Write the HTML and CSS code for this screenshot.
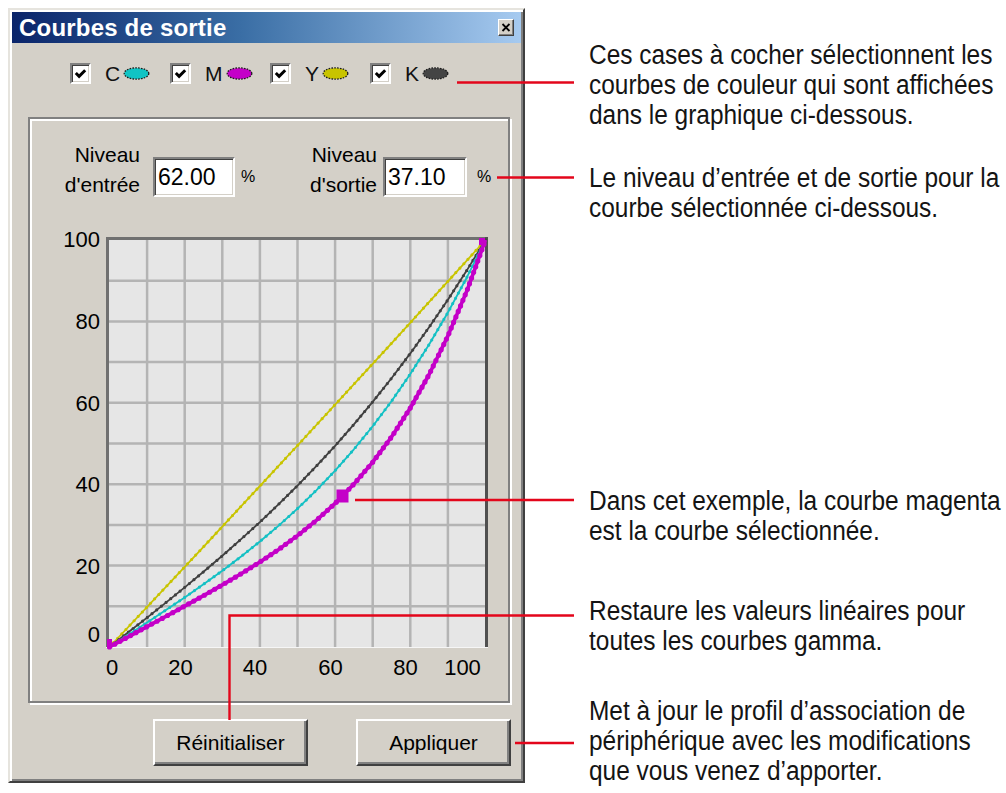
FILE: index.html
```html
<!DOCTYPE html>
<html lang="fr">
<head>
<meta charset="utf-8">
<title>Courbes de sortie</title>
<link rel="stylesheet" href="styles.css">
</head>
<body>
<div class="page">
  <div class="window">
    <div class="titlebar">
      <span class="title">Courbes de sortie</span>
      <span class="close"><svg viewBox="0 0 10 9" width="10" height="9"><path d="M1.5 1 L8.5 8 M8.5 1 L1.5 8" stroke="#000" stroke-width="1.8" fill="none"/></svg></span>
    </div>

    <div class="channels">
      <div class="chan">
        <span class="cb"><svg viewBox="0 0 16 16" width="15" height="15"><path d="M3 7.5 L6.5 11 L13 4.5" stroke="#000" stroke-width="3.2" fill="none"/></svg></span>
        <span class="chan-letter">C</span>
        <svg class="swatch" viewBox="0 0 27 13" width="27" height="13"><ellipse cx="13.5" cy="6.5" rx="12.3" ry="5.6" fill="#10c4c4" stroke="#1c1c1c" stroke-width="1.3" stroke-dasharray="1.6 1.2"/></svg>
      </div>
      <div class="chan">
        <span class="cb"><svg viewBox="0 0 16 16" width="15" height="15"><path d="M3 7.5 L6.5 11 L13 4.5" stroke="#000" stroke-width="3.2" fill="none"/></svg></span>
        <span class="chan-letter">M</span>
        <svg class="swatch" viewBox="0 0 27 13" width="27" height="13"><ellipse cx="13.5" cy="6.5" rx="12.3" ry="5.6" fill="#c400c8" stroke="#1c1c1c" stroke-width="1.3" stroke-dasharray="1.6 1.2"/></svg>
      </div>
      <div class="chan">
        <span class="cb"><svg viewBox="0 0 16 16" width="15" height="15"><path d="M3 7.5 L6.5 11 L13 4.5" stroke="#000" stroke-width="3.2" fill="none"/></svg></span>
        <span class="chan-letter">Y</span>
        <svg class="swatch" viewBox="0 0 27 13" width="27" height="13"><ellipse cx="13.5" cy="6.5" rx="12.3" ry="5.6" fill="#c8c400" stroke="#1c1c1c" stroke-width="1.3" stroke-dasharray="1.6 1.2"/></svg>
      </div>
      <div class="chan">
        <span class="cb"><svg viewBox="0 0 16 16" width="15" height="15"><path d="M3 7.5 L6.5 11 L13 4.5" stroke="#000" stroke-width="3.2" fill="none"/></svg></span>
        <span class="chan-letter">K</span>
        <svg class="swatch" viewBox="0 0 27 13" width="27" height="13"><ellipse cx="13.5" cy="6.5" rx="12.3" ry="5.6" fill="#444444" stroke="#1c1c1c" stroke-width="1.3" stroke-dasharray="1.6 1.2"/></svg>
      </div>
    </div>

    <div class="group">
      <div class="levels">
        <div class="lvl-label lvl-in">Niveau<br>d'entrée</div>
        <div class="field f-in">62.00</div>
        <span class="pct">%</span>
        <div class="lvl-label lvl-out">Niveau<br>d'sortie</div>
        <div class="field f-out">37.10</div>
        <span class="pct pct2">%</span>
      </div>

      <svg class="chart" viewBox="30 225 478 476" width="478" height="476">
        <rect x="109" y="240" width="376" height="407" fill="#e6e6e6"/>
        <g stroke="#b4b4b4" stroke-width="2.5">
          <path d="M147.1 240 V647 M184.7 240 V647 M222.3 240 V647 M259.9 240 V647 M297.5 240 V647 M335.1 240 V647 M372.7 240 V647 M410.3 240 V647 M447.9 240 V647"/>
          <path d="M109 606.3 H485 M109 565.6 H485 M109 524.9 H485 M109 484.2 H485 M109 443.5 H485 M109 402.8 H485 M109 362.1 H485 M109 321.4 H485 M109 280.7 H485"/>
        </g>
        <rect x="106" y="237" width="3" height="410" fill="#707070"/>
        <rect x="106" y="237" width="382" height="3" fill="#707070"/>
        <rect x="485" y="237" width="3" height="410" fill="#505050"/>
        <rect x="106" y="647" width="382" height="1" fill="#f6f6f6"/>

        <g fill="none" stroke-linejoin="round">
          <polyline stroke="#c8c400" stroke-width="1.8" points="109.5,647 203.5,546.8 297.5,445.5 391.5,343.3 485.5,240"/>
          <polyline stroke="#c8c400" stroke-width="3.2" stroke-linecap="round" stroke-dasharray="0 6" points="109.5,647 203.5,546.8 297.5,445.5 391.5,343.3 485.5,240"/>

          <polyline stroke="#404040" stroke-width="1.8" points="109.5,647 128.3,632.3 147.1,617.6 165.9,602.6 184.7,587.4 203.5,571.8 222.3,555.8 241.1,539.2 259.9,522.1 278.7,504.2 297.5,485.6 316.3,466.2 335.1,445.8 353.9,424.4 372.7,401.9 391.5,378.3 410.3,353.4 429.1,327.2 447.9,299.7 466.7,270.6 485.5,240"/>
          <polyline stroke="#404040" stroke-width="3.2" stroke-linecap="round" stroke-dasharray="0 6" points="109.5,647 128.3,632.3 147.1,617.6 165.9,602.6 184.7,587.4 203.5,571.8 222.3,555.8 241.1,539.2 259.9,522.1 278.7,504.2 297.5,485.6 316.3,466.2 335.1,445.8 353.9,424.4 372.7,401.9 391.5,378.3 410.3,353.4 429.1,327.2 447.9,299.7 466.7,270.6 485.5,240"/>

          <polyline stroke="#14c0c4" stroke-width="1.8" points="109.5,647 128.3,634.8 147.1,622.5 165.9,610.1 184.7,597.4 203.5,584.3 222.3,570.8 241.1,556.5 259.9,541.5 278.7,525.6 297.5,508.6 316.3,490.3 335.1,470.6 353.9,449.3 372.7,426.2 391.5,401.2 410.3,374.0 429.1,344.5 447.9,312.5 466.7,277.7 485.5,240"/>
          <polyline stroke="#14c0c4" stroke-width="3.2" stroke-linecap="round" stroke-dasharray="0 6" points="109.5,647 128.3,634.8 147.1,622.5 165.9,610.1 184.7,597.4 203.5,584.3 222.3,570.8 241.1,556.5 259.9,541.5 278.7,525.6 297.5,508.6 316.3,490.3 335.1,470.6 353.9,449.3 372.7,426.2 391.5,401.2 410.3,374.0 429.1,344.5 447.9,312.5 466.7,277.7 485.5,240"/>

          <polyline stroke="#c400c8" stroke-width="3.6" points="109.5,647 128.3,636.8 147.1,626.6 165.9,616.4 184.7,606.1 203.5,595.7 222.3,584.9 241.1,573.8 259.9,562.0 278.7,549.4 297.5,535.6 316.3,520.4 335.1,503.4 353.9,484.1 372.7,462.2 391.5,437.0 410.3,408.0 429.1,374.5 447.9,335.9 466.7,291.3 485.5,240"/>
          <polyline stroke="#c400c8" stroke-width="5.2" stroke-linecap="round" stroke-dasharray="0 6" points="109.5,647 128.3,636.8 147.1,626.6 165.9,616.4 184.7,606.1 203.5,595.7 222.3,584.9 241.1,573.8 259.9,562.0 278.7,549.4 297.5,535.6 316.3,520.4 335.1,503.4 353.9,484.1 372.7,462.2 391.5,437.0 410.3,408.0 429.1,374.5 447.9,335.9 466.7,291.3 485.5,240"/>
        </g>
        <rect x="107" y="639" width="5" height="8" fill="#c400c8"/>
        <rect x="479" y="238" width="6" height="7" fill="#c400c8"/>
        <rect x="336.5" y="489.5" width="12" height="13" fill="#c400c8"/>

        <g class="axis" text-anchor="end">
          <text x="100" y="247">100</text>
          <text x="100" y="329">80</text>
          <text x="100" y="411">60</text>
          <text x="100" y="492">40</text>
          <text x="100" y="574">20</text>
          <text x="100" y="642">0</text>
        </g>
        <g class="axis" text-anchor="middle">
          <text x="112" y="675">0</text>
          <text x="180.5" y="675">20</text>
          <text x="255" y="675">40</text>
          <text x="330.5" y="675">60</text>
          <text x="405.5" y="675">80</text>
          <text x="462.5" y="675">100</text>
        </g>
      </svg>
    </div>

    <div class="buttons">
      <button class="btn">Réinitialiser</button>
      <button class="btn">Appliquer</button>
    </div>
  </div>

  <div class="notes">
    <p class="note n1">Ces cases à cocher sélectionnent les<br>courbes de couleur qui sont affichées<br>dans le graphique ci-dessous.</p>
    <p class="note n2">Le niveau d’entrée et de sortie pour la<br>courbe sélectionnée ci-dessous.</p>
    <p class="note n3">Dans cet exemple, la courbe magenta<br>est la courbe sélectionnée.</p>
    <p class="note n4">Restaure les valeurs linéaires pour<br>toutes les courbes gamma.</p>
    <p class="note n5">Met à jour le profil d’association de<br>périphérique avec les modifications<br>que vous venez d’apporter.</p>
  </div>

  <svg class="leaders" viewBox="0 0 1006 793" width="1006" height="793">
    <g stroke="#e3061b" stroke-width="2.4" fill="none">
      <path d="M457 82.5 H574"/>
      <path d="M497 177.5 H574"/>
      <path d="M355 500 H574"/>
      <path d="M229.5 720 V615.5 H574"/>
      <path d="M515 743 H574"/>
    </g>
  </svg>
</div>
</body>
</html>
```

FILE: styles.css
```css
* { box-sizing: border-box; }

html, body {
  margin: 0;
  padding: 0;
}

body {
  background: #ffffff;
  width: 1006px;
  height: 793px;
  overflow: hidden;
  font-family: "Liberation Sans", Arial, sans-serif;
  color: #000;
}

.page {
  position: relative;
  display: flex;
  align-items: flex-start;
  width: 1006px;
  height: 793px;
}

/* ---------- dialog window ---------- */
.window {
  margin: 8px 0 0 8px;
  width: 517px;
  height: 775px;
  flex: none;
  background: #d4d0c8;
  border: 2px solid;
  border-color: #e6e4de #404040 #404040 #e6e4de;
  box-shadow: inset 2px 2px 0 #ffffff, inset -2px -2px 0 #808080;
  padding: 2px;
  display: flex;
  flex-direction: column;
}

.titlebar {
  height: 31px;
  flex: none;
  display: flex;
  align-items: center;
  padding-left: 7px;
  background: linear-gradient(to right, #0a246a 0%, #3a6ea5 45%, #a6caf0 100%);
}

.title {
  color: #ffffff;
  font-weight: bold;
  font-size: 24px;
  line-height: 1;
  letter-spacing: 0.2px;
}

.close {
  margin-left: auto;
  margin-right: 7px;
  width: 16px;
  height: 17px;
  background: #d4d0c8;
  border: 1px solid;
  border-color: #ffffff #404040 #404040 #ffffff;
  box-shadow: inset -1px -1px 0 #808080;
  display: flex;
  align-items: center;
  justify-content: center;
}

.close svg { display: block; }

/* ---------- channel checkboxes ---------- */
.channels {
  margin-top: 20px;
  height: 21px;
  padding-left: 58px;
  display: flex;
  flex: none;
}

.chan {
  width: 100px;
  display: flex;
  align-items: center;
}

.cb {
  width: 21px;
  height: 21px;
  background: #ffffff;
  border: 2px solid;
  border-color: #808080 #ffffff #ffffff #808080;
  box-shadow: inset 1px 1px 0 #404040, inset -1px -1px 0 #d4d0c8;
  display: flex;
  align-items: center;
  justify-content: center;
}

.cb svg { display: block; }

.chan-letter {
  margin-left: 14px;
  font-size: 21px;
  line-height: 1;
  color: #111;
}

.swatch {
  display: block;
  margin-left: 3px;
}

/* ---------- group box ---------- */
.group {
  margin: 33px 0 0 16px;
  width: 482px;
  height: 586px;
  flex: none;
  border: 2px solid #808080;
  box-shadow: inset 2px 2px 0 #ffffff, 2px 2px 0 #ffffff;
  padding-top: 19px;
  display: flex;
  flex-direction: column;
}

.levels {
  display: flex;
  align-items: flex-start;
  height: 64px;
  flex: none;
}

.lvl-label {
  width: 80px;
  font-size: 21px;
  line-height: 30px;
  padding-top: 2px;
  text-align: right;
  white-space: nowrap;
}

.lvl-in { margin-left: 30px; }
.lvl-out { margin-left: 42px; }

.field {
  margin-top: 19px;
  height: 40px;
  background: #ffffff;
  border: 2px solid;
  border-color: #808080 #ffffff #ffffff #808080;
  box-shadow: inset 1px 1px 0 #404040, inset -1px -1px 0 #d4d0c8;
  font-size: 23px;
  line-height: 36px;
  padding-left: 3px;
}

.f-in { margin-left: 13px; width: 82px; }
.f-out { margin-left: 6px; width: 84px; }

.pct {
  margin-top: 19px;
  margin-left: 6px;
  width: 14px;
  font-size: 16px;
  line-height: 40px;
}

.pct2 { margin-left: 10px; }

.chart {
  display: block;
  margin-top: 23px;
  flex: none;
}

.axis text {
  font-family: "Liberation Sans", Arial, sans-serif;
  font-size: 22px;
  fill: #000;
}

/* ---------- buttons ---------- */
.buttons {
  margin-top: 16px;
  padding-right: 10px;
  display: flex;
  justify-content: flex-end;
  gap: 48px;
  flex: none;
}

.btn {
  width: 155px;
  height: 47px;
  padding: 0;
  background: #d4d0c8;
  border: 2px solid;
  border-color: #ffffff #404040 #404040 #ffffff;
  box-shadow: inset -2px -2px 0 #808080;
  font-family: "Liberation Sans", Arial, sans-serif;
  font-size: 21px;
  color: #000;
}

/* ---------- annotations ---------- */
.notes {
  margin-left: 64px;
  padding-top: 40px;
  display: flex;
  flex-direction: column;
  font-family: "Liberation Sans", Arial, sans-serif;
  font-size: 27px;
  line-height: 30px;
  color: #141414;
  white-space: nowrap;
  transform: scaleX(0.905);
  transform-origin: 0 0;
}

.note { margin: 0; }
.n2 { margin-top: 33px; }
.n3 { margin-top: 263px; }
.n4 { margin-top: 50px; }
.n5 { margin-top: 40px; }

.leaders {
  position: absolute;
  left: 0;
  top: 0;
  pointer-events: none;
}
```
